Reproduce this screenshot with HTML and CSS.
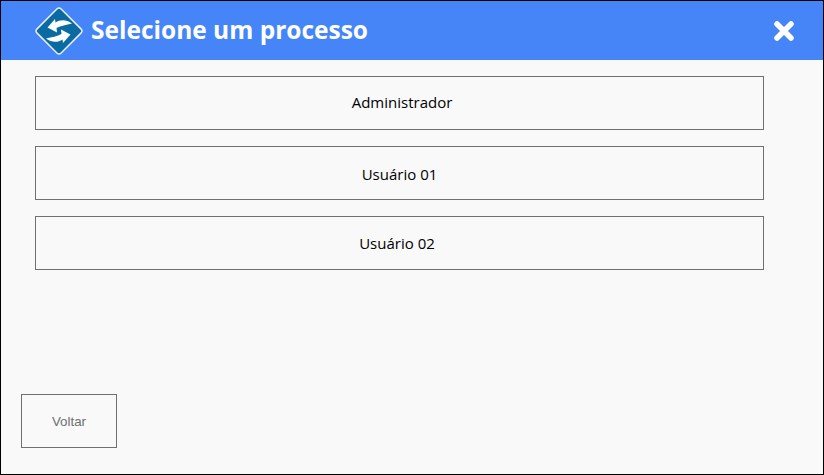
FILE: index.html
```html
<!DOCTYPE html>
<html>
<head>
    <title>Selecione um processo</title>
    <link rel="stylesheet" href="styles.css">
</head>
<body>
    <div class="window">
        <div class="header">
            <svg class="logo" width="50" height="50" viewBox="0 0 50 50">
                <rect x="8" y="8" width="34" height="34" rx="3" transform="rotate(45 25 25)" fill="#0a6ba3" stroke="#e8eef5" stroke-width="1.5"/>
                <path d="M13.500 21.500 L21 13 L21.500 16.500 C26 13.500 32 13 38 17.500 C32 19 27 19.500 22.500 22 L23 26.500 Z" fill="#fff"/>
                <path d="M13.500 21.500 L21 13 L21.500 16.500 C26 13.500 32 13 38 17.500 C32 19 27 19.500 22.500 22 L23 26.500 Z" fill="#fff" transform="rotate(180 25 25)"/>
            </svg>
            <h1>Selecione um processo</h1>
            <svg class="close" width="20" height="20" viewBox="0 0 20 20">
                <path d="M3 3 L17 17 M17 3 L3 17" stroke="#fff" stroke-width="5.500" stroke-linecap="round"/>
            </svg>
        </div>
        <div class="content">
            <div class="list">
                <button class="option admin">Administrador</button>
                <button class="option user-one">Usuário 01</button>
                <button class="option user-two">Usuário 02</button>
            </div>
            <button class="back">Voltar</button>
        </div>
    </div>
</body>
</html>
```

FILE: styles.css
```css
html, body {
    margin: 0;
    padding: 0;
}
.window {
    box-sizing: border-box;
    width: 824px;
    height: 475px;
    display: flex;
    flex-direction: column;
    background: #f9f9f9;
    border: 1px solid #000;
}
.header {
    height: 59px;
    flex: none;
    display: flex;
    align-items: center;
    padding-left: 33px;
    background: #4585f8;
}
.logo {
    flex: none;
}
.header h1 {
    flex: 1;
    margin: 0 0 2px 7px;
    font-family: "Open Sans", sans-serif;
    font-size: 24.500px;
    font-weight: 700;
    color: #fff;
}
.close {
    flex: none;
    margin-right: 29px;
}
.content {
    flex: 1;
    display: flex;
    flex-direction: column;
    justify-content: space-between;
    padding: 16px 0 26px 20px;
}
.list {
    display: flex;
    flex-direction: column;
    gap: 16px;
    padding-left: 14px;
}
button {
    box-sizing: border-box;
    background: transparent;
    border: 1px solid #707070;
    border-radius: 0;
    padding: 0;
}
.option {
    width: 729px;
    height: 54px;
    font-family: "Open Sans", sans-serif;
    font-size: 15px;
    color: #000;
}
.admin {
    padding: 0 0 3px 5px;
}
.user-one {
    padding-top: 2px;
}
.user-two {
    padding-right: 5px;
}
.back {
    width: 96px;
    height: 54px;
    font-family: "Liberation Sans", Arial, sans-serif;
    font-size: 13.333px;
    color: #6f6f6f;
}
```
